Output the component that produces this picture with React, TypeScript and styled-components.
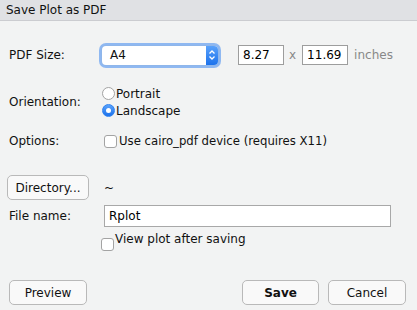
import React from 'react'
import styled, { createGlobalStyle } from 'styled-components'

const GlobalStyle = createGlobalStyle`
  html, body {
    margin: 0;
    padding: 0;
    background: #f2f3f3;
  }
  body {
    font-family: "DejaVu Sans", "Liberation Sans", sans-serif;
    font-size: 12px;
    color: #111;
  }
`

const Dialog = styled.div`
  display: flex;
  flex-direction: column;
  width: 417px;
  height: 310px;
  background: #f2f3f3;
  overflow: hidden;
`

const TitleBar = styled.div`
  display: flex;
  align-items: center;
  height: 20px;
  padding-left: 6px;
  background: #e0e1e4;
  border-bottom: 1px solid #cbccd0;
  font-size: 12px;
  color: #111;
`

const Row = styled.div<{ $top: number; $height: number; $align?: string; $pl?: number }>`
  display: flex;
  align-items: ${(p) => p.$align || 'center'};
  margin-top: ${(p) => p.$top}px;
  height: ${(p) => p.$height}px;
  padding-left: ${(p) => p.$pl ?? 9}px;
`

const Label = styled.div`
  width: 90px;
  flex-shrink: 0;
  align-self: center;
`

const SelectBox = styled.div`
  display: flex;
  align-items: stretch;
  width: 116px;
  height: 19px;
  margin-left: 3px;
  background: #fff;
  border-radius: 4px;
  box-shadow: 0 0 0 1px #8fb6ea, 0 0 0 3px rgba(110, 164, 240, 0.75);
  overflow: hidden;
`

const SelectValue = styled.div`
  flex: 1;
  display: flex;
  align-items: center;
  padding-left: 8px;
`

const SelectArrow = styled.div`
  width: 12px;
  display: flex;
  align-items: center;
  justify-content: center;
  background: linear-gradient(#5aa2fb, #1c72ec);
`

const SizeInput = styled.div<{ $ml: number }>`
  display: flex;
  align-items: center;
  box-sizing: border-box;
  width: 46px;
  height: 20px;
  margin-left: ${(p) => p.$ml}px;
  padding-left: 4px;
  background: #fff;
  border: 1px solid #9d9d9d;
  color: #000;
`

const Times = styled.span`
  margin-left: 5px;
  color: #888;
`

const Units = styled.span`
  margin-left: 6px;
  color: #888;
`

const RadioGroup = styled.div`
  display: flex;
  flex-direction: column;
  margin-left: 3px;
`

const RadioItem = styled.div`
  display: flex;
  align-items: center;
  height: 17px;
`

const RadioCircle = styled.span<{ $checked?: boolean }>`
  box-sizing: border-box;
  display: flex;
  align-items: center;
  justify-content: center;
  width: 13px;
  height: 13px;
  margin-right: 1px;
  border-radius: 50%;
  border: 1px solid ${(p) => (p.$checked ? '#2f82f0' : '#a3a3a3')};
  background: ${(p) => (p.$checked ? 'linear-gradient(#5aa2fb, #1c72ec)' : '#fff')};

  &::after {
    content: '';
    display: ${(p) => (p.$checked ? 'block' : 'none')};
    width: 5px;
    height: 5px;
    border-radius: 50%;
    background: #fff;
  }
`

const CheckBox = styled.span<{ $ml: number; $mr?: number }>`
  box-sizing: border-box;
  display: inline-block;
  width: 13px;
  height: 13px;
  margin-left: ${(p) => p.$ml}px;
  margin-right: ${(p) => p.$mr ?? 2}px;
  border-radius: 3px;
  border: 1px solid #a3a3a3;
  background: #fff;
  flex-shrink: 0;
`

const OptionText = styled.span`
  font-size: 11.7px;
`

const Button = styled.div<{ $width: number; $bold?: boolean }>`
  box-sizing: border-box;
  display: flex;
  align-items: center;
  justify-content: center;
  width: ${(p) => p.$width}px;
  height: 25px;
  border: 1px solid #b9b9b9;
  border-radius: 5px;
  background: #f9f9f9;
  font-weight: ${(p) => (p.$bold ? 'bold' : 'normal')};
`

const Tilde = styled.span`
  margin-left: 15px;
`

const NameInput = styled.div`
  box-sizing: border-box;
  display: flex;
  align-items: center;
  width: 287px;
  height: 22px;
  margin-left: 5px;
  padding-left: 4px;
  background: #fff;
  border: 1px solid #a8a8a8;
  color: #000;
`

const ViewText = styled.span`
  align-self: flex-start;
  margin-top: -3px;
`

const Footer = styled.div`
  display: flex;
  justify-content: space-between;
  margin-top: 29px;
  padding: 0 11px 0 9px;
`

const ButtonGroup = styled.div`
  display: flex;
  gap: 9px;
`

const UpDown = () => (
  <svg width="8" height="12" viewBox="0 0 8 12">
    <path d="M1.5 4.5 L4 2 L6.5 4.5 M1.5 7.5 L4 10 L6.5 7.5" fill="none" stroke="#fff" strokeWidth="1.3" />
  </svg>
)

export default function App() {
  return (
    <>
      <GlobalStyle />
      <Dialog>
        <TitleBar>Save Plot as PDF</TitleBar>

        <Row $top={21} $height={26}>
          <Label>PDF Size:</Label>
          <SelectBox>
            <SelectValue>A4</SelectValue>
            <SelectArrow>
              <UpDown />
            </SelectArrow>
          </SelectBox>
          <SizeInput $ml={20}>8.27</SizeInput>
          <Times>x</Times>
          <SizeInput $ml={6}>11.69</SizeInput>
          <Units>inches</Units>
        </Row>

        <Row $top={17} $height={34}>
          <Label>Orientation:</Label>
          <RadioGroup>
            <RadioItem>
              <RadioCircle />
              Portrait
            </RadioItem>
            <RadioItem>
              <RadioCircle $checked />
              Landscape
            </RadioItem>
          </RadioGroup>
        </Row>

        <Row $top={13} $height={18}>
          <Label>Options:</Label>
          <CheckBox $ml={5} />
          <OptionText>Use cairo_pdf device (requires X11)</OptionText>
        </Row>

        <Row $top={25} $height={25} $pl={7}>
          <Button $width={82}>Directory...</Button>
          <Tilde>~</Tilde>
        </Row>

        <Row $top={5} $height={22}>
          <Label>File name:</Label>
          <NameInput>Rplot</NameInput>
        </Row>

        <Row $top={8} $height={16} $align="flex-end">
          <CheckBox $ml={92} $mr={1} />
          <ViewText>View plot after saving</ViewText>
        </Row>

        <Footer>
          <Button $width={78}>Preview</Button>
          <ButtonGroup>
            <Button $width={77} $bold>
              Save
            </Button>
            <Button $width={78}>Cancel</Button>
          </ButtonGroup>
        </Footer>
      </Dialog>
    </>
  )
}
